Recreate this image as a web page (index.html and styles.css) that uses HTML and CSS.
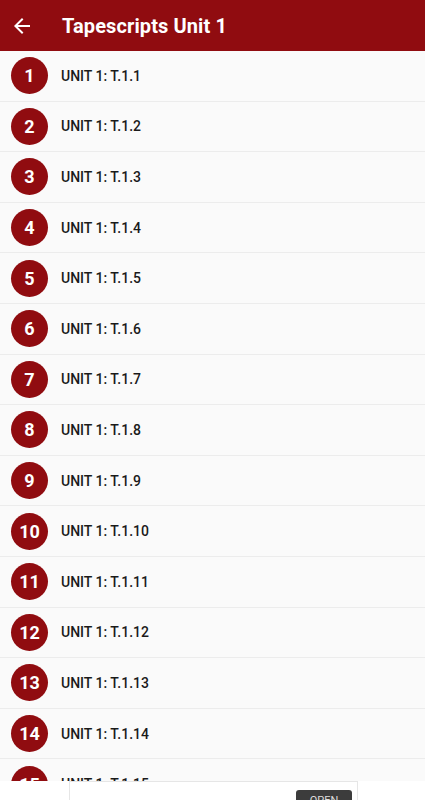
FILE: index.html
```html
<!DOCTYPE html>
<html>
<head>
<meta charset="utf-8">
<link rel="stylesheet" href="styles.css">
</head>
<body>
<div class="app">
  <header class="bar">
    <svg class="back" width="24" height="24" viewBox="0 0 24 24"><path d="M20 11H7.83l5.59-5.59L12 4l-8 8 8 8 1.41-1.41L7.83 13H20v-2z" fill="#fff"/></svg>
    <h1 class="title">Tapescripts Unit 1</h1>
  </header>
  <ul class="list">
    <li class="row"><span class="num">1</span><span class="label">UNIT 1: T.1.1</span></li>
    <li class="row"><span class="num">2</span><span class="label">UNIT 1: T.1.2</span></li>
    <li class="row"><span class="num">3</span><span class="label">UNIT 1: T.1.3</span></li>
    <li class="row"><span class="num">4</span><span class="label">UNIT 1: T.1.4</span></li>
    <li class="row"><span class="num">5</span><span class="label">UNIT 1: T.1.5</span></li>
    <li class="row"><span class="num">6</span><span class="label">UNIT 1: T.1.6</span></li>
    <li class="row"><span class="num">7</span><span class="label">UNIT 1: T.1.7</span></li>
    <li class="row"><span class="num">8</span><span class="label">UNIT 1: T.1.8</span></li>
    <li class="row"><span class="num">9</span><span class="label">UNIT 1: T.1.9</span></li>
    <li class="row"><span class="num">10</span><span class="label">UNIT 1: T.1.10</span></li>
    <li class="row"><span class="num">11</span><span class="label">UNIT 1: T.1.11</span></li>
    <li class="row"><span class="num">12</span><span class="label">UNIT 1: T.1.12</span></li>
    <li class="row"><span class="num">13</span><span class="label">UNIT 1: T.1.13</span></li>
    <li class="row"><span class="num">14</span><span class="label">UNIT 1: T.1.14</span></li>
    <li class="row"><span class="num">15</span><span class="label">UNIT 1: T.1.15</span></li>
  </ul>
  <div class="ad">
    <div class="adbox"><span class="adbtn">OPEN</span></div>
  </div>
</div>
</body>
</html>
```
FILE: styles.css
```css
* { box-sizing: border-box; }
html, body { margin: 0; padding: 0; }
body { font-family: Roboto, "Noto Sans", Arial, sans-serif; background: #fafafa; }
.app { width: 425px; height: 800px; overflow: hidden; position: relative; display: flex; flex-direction: column; }
.bar { height: 51px; background: #900c10; display: flex; align-items: center; flex-shrink: 0; }
.back { margin-left: 10px; }
.title { margin: 0 0 0 28px; color: #fff; font-size: 20px; font-weight: 700; letter-spacing: 0.1px; }
.list { list-style: none; margin: 0; padding: 0; flex: 1; overflow: hidden; background: #fafafa; }
.row { height: 50.6px; display: flex; align-items: center; border-bottom: 1px solid #ececec; }
.num { width: 37px; height: 37px; border-radius: 50%; background: #900c10; color: #fff; display: flex; align-items: center; justify-content: center; font-weight: 700; font-size: 18px; margin-left: 11px; margin-right: 13px; }
.label { font-size: 14px; font-weight: 500; color: #1a1a1a; }
.ad { position: absolute; left: 0; right: 0; bottom: 0; height: 19px; background: #fff; }
.adbox { position: absolute; left: 69px; width: 289px; top: 0; height: 30px; border: 1px solid #e6e6e6; background: #fff; }
.adbtn { position: absolute; left: 226px; top: 8px; width: 56px; height: 24px; background: #3c3c3c; border-radius: 3px; color: #ddd; font-size: 11px; text-align: center; line-height: 22px; }
```
